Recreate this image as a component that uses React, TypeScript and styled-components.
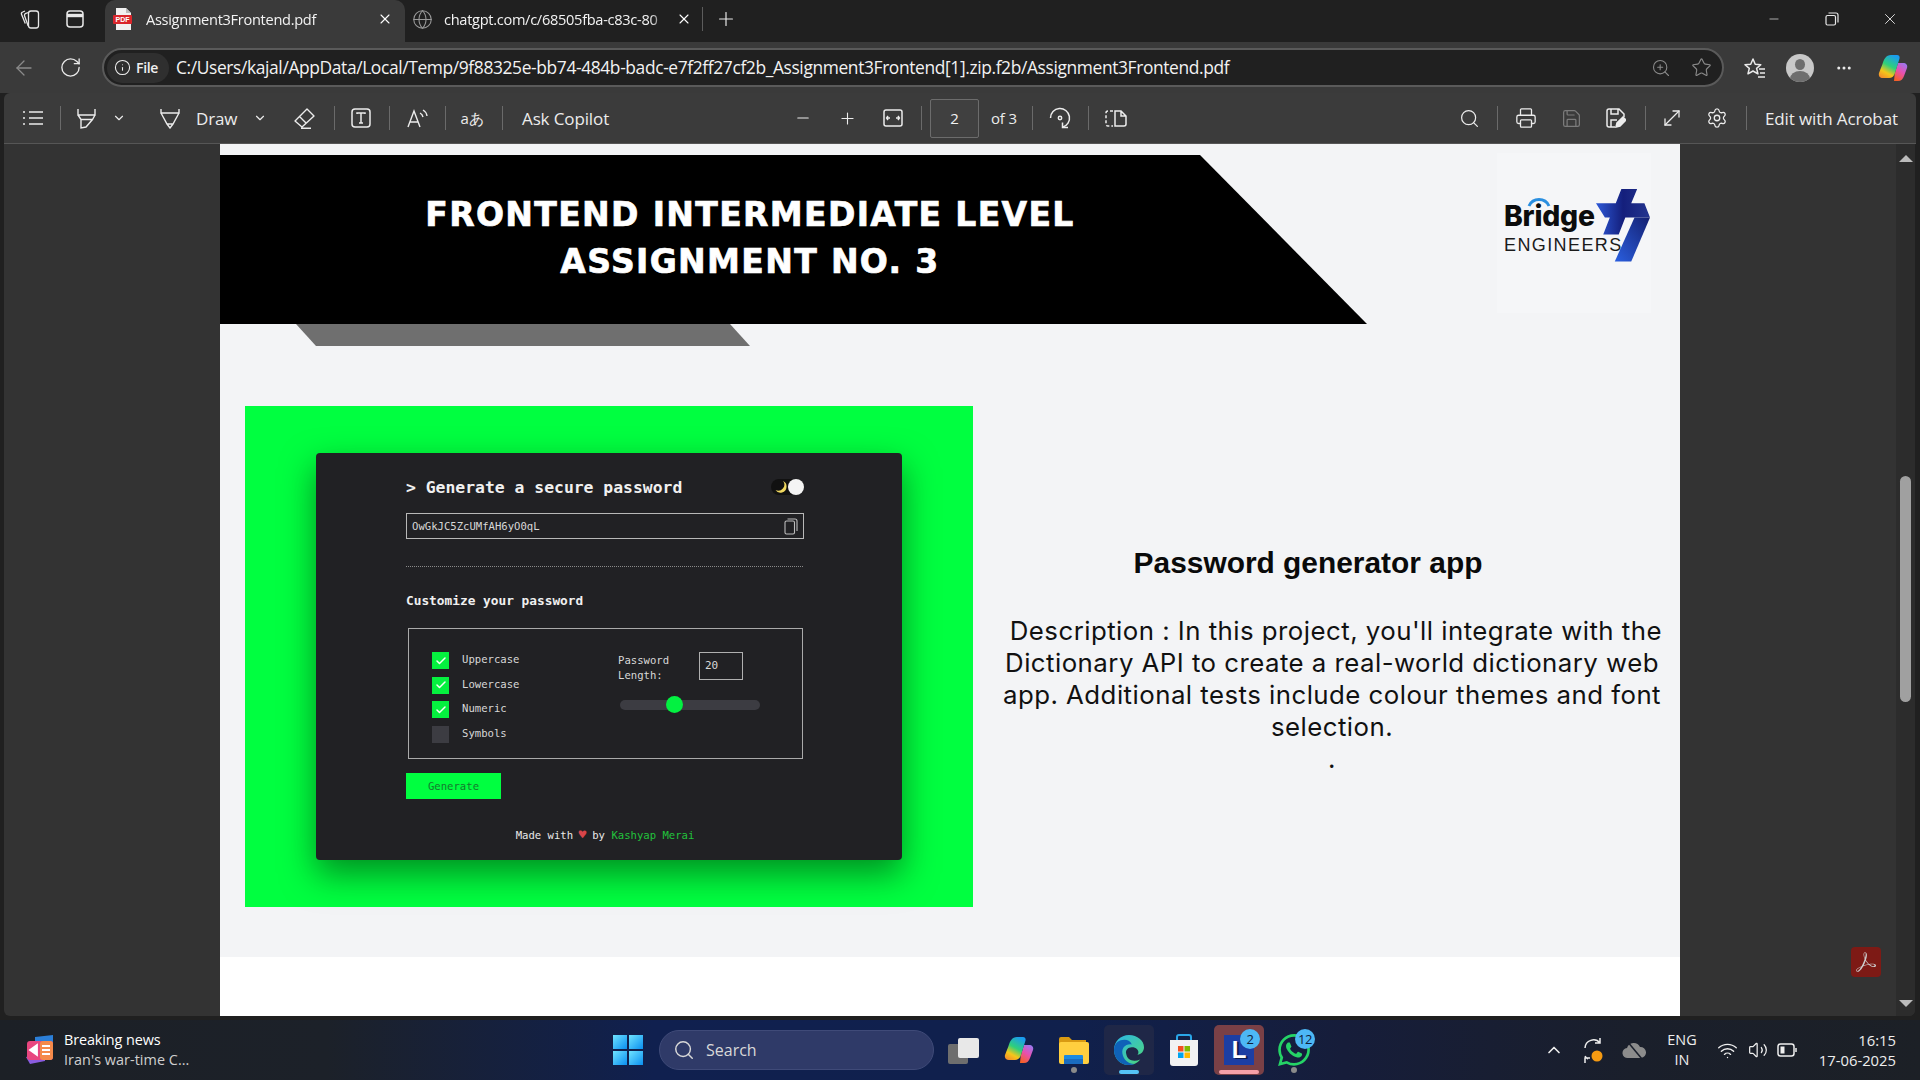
import * as React from 'react'
import styled, {createGlobalStyle} from 'styled-components'
import {ArrowLeft,RotateCw,Info,ZoomIn,Star,MoreHorizontal,X,Plus,Minus,Globe,ChevronDown,ChevronUp,Search,Printer,Save,MoveDiagonal,Settings,Wifi,Volume2,Check} from 'lucide-react'
import {SiAdobeacrobatreader,SiWhatsapp} from 'react-icons/si'

const ui = `"Open Sans","Noto Sans",sans-serif`
const mono = `"DejaVu Sans Mono","Liberation Mono",monospace`

const Global = createGlobalStyle`
    html,body{margin:0;padding:0;background:#202020;overflow:hidden;}
    #root{width:1920px;height:1080px;}
`
const Root = styled.div`
    width:1920px;height:1080px;display:flex;flex-direction:column;background:#202020;
    font-family:${ui};color:#fff;overflow:hidden;
`
/* tab strip */
const TabStrip = styled.div`
    height:42px;flex:none;display:flex;align-items:flex-start;background:#202020;position:relative;
`
const StripIcon = styled.div<{$w:number}>`
    width:${p=>p.$w}px;height:38px;flex:none;display:flex;align-items:center;justify-content:center;
    color:#e8e8e8;
`
const Tab = styled.div<{$active?:boolean;$w:number}>`
    width:${p=>p.$w}px;height:42px;flex:none;display:flex;align-items:center;
    box-sizing:border-box;padding:0 ${p=>p.$active?'12px':'10px'} 4px ${p=>p.$active?'6px':'7px'};
    background:${p=>p.$active?'#3a3a3a':'transparent'};border-radius:10px 10px 0 0;
`
const TabTitle = styled.div`
    flex:1;margin-left:11px;font-size:14.6px;letter-spacing:-.3px;white-space:nowrap;overflow:hidden;color:#f2f2f2;
    mask-image:linear-gradient(90deg,#000 92%,transparent);
`
const StripSep = styled.div`width:1px;height:24px;margin-top:7px;background:#5c5c5c;flex:none;`
const WinControls = styled.div`
    margin-left:auto;display:flex;align-items:center;padding-right:1px;color:#e8e8e8;
`
/* address row */
const AddressRow = styled.div`
    height:51px;flex:none;display:flex;align-items:center;background:#3a3a3a;box-sizing:border-box;
`
const RowIcon = styled.div<{$w:number;$dim?:boolean}>`
    width:${p=>p.$w}px;flex:none;display:flex;align-items:center;justify-content:center;
    color:${p=>p.$dim?'#8a8a8a':'#eaeaea'};
`
const AddressBar = styled.div`
    width:1622px;height:39px;flex:none;box-sizing:border-box;display:flex;align-items:center;
    background:#202020;border:2px solid #5a5a5a;border-radius:20px;padding:0 1px 0 3px;
`
const FilePill = styled.div`
    width:62px;height:30px;flex:none;display:flex;align-items:center;gap:5px;padding-left:7px;box-sizing:border-box;
    background:#2f2f2f;border-radius:15px;font-size:14px;font-weight:600;color:#f0f0f0;letter-spacing:-.3px;
`
const Url = styled.div`
    flex:1;margin-left:7px;padding-bottom:1px;font-size:17.4px;letter-spacing:-.376px;color:#f2f2f2;white-space:nowrap;
`
const Avatar = styled.div`
    width:28px;height:28px;border-radius:50%;background:#c8c8c8;position:relative;overflow:hidden;
    &::before{content:'';position:absolute;left:9px;top:5px;width:10px;height:11px;border-radius:50%;background:#6e6e6e;}
    &::after{content:'';position:absolute;left:4px;top:17px;width:20px;height:16px;border-radius:50%;background:#6e6e6e;}
`
/* pdf toolbar */
const Toolbar = styled.div`
    height:51px;flex:none;margin:0 4px;display:flex;align-items:center;background:#3b3b3b;
    padding-left:13px;border-bottom:1px solid #565656;border-radius:6px 6px 0 0;box-sizing:border-box;
`
const Slot = styled.div<{$w:number;$dim?:boolean;$left?:number;$small?:boolean}>`
    width:${p=>p.$w}px;flex:none;display:flex;align-items:center;
    justify-content:${p=>p.$left!==undefined?'flex-start':'center'};
    padding-left:${p=>p.$left??0}px;box-sizing:border-box;
    color:${p=>p.$dim?'#7c7c7c':'#ececec'};font-size:${p=>p.$small?'15px':'17px'};letter-spacing:-.12px;white-space:nowrap;
`
const BarSep = styled.div`width:1px;height:24px;background:#6a6a6a;`
const PageBox = styled.div`
    width:49px;height:39px;margin-left:3px;flex:none;display:flex;align-items:center;justify-content:center;
    background:#404040;border:1px solid #6c6c6c;border-radius:2px;box-sizing:border-box;font-size:15px;color:#f2f2f2;
`
const RightTools = styled.div`margin-left:auto;display:flex;align-items:center;`
/* viewer */
const Viewer = styled.div`
    height:872px;flex:none;margin:0 5px 0 4px;display:flex;background:#333;position:relative;
    border-radius:0 0 6px 6px;overflow:hidden;
`
const Gutter = styled.div<{$w:number}>`width:${p=>p.$w}px;flex:none;`
const Page = styled.div`
    width:1460px;flex:none;display:flex;flex-direction:column;background:#f3f4f6;color:#000;overflow:hidden;
`
const HeaderRow = styled.div`display:flex;padding-top:11px;height:169px;flex:none;`
const Banner = styled.div`
    width:1147px;height:169px;flex:none;background:#000;color:#fff;box-sizing:border-box;padding-top:36px;
    clip-path:polygon(0 0,980px 0,1147px 169px,0 169px);
`
const BannerTitle = styled.div`
    width:1060px;text-align:center;font-family:"DejaVu Sans",Inter,sans-serif;font-weight:700;
    font-size:33px;line-height:47px;letter-spacing:1.36px;-webkit-text-stroke:.7px #fff;
`
const LogoBox = styled.div`
    width:154px;height:160px;margin-left:130px;margin-top:-2px;flex:none;background:#f5f6f8;
    box-sizing:border-box;padding:35px 0 0 7px;display:flex;
`
const LogoText = styled.div`width:91px;flex:none;display:flex;flex-direction:column;padding-top:13px;position:relative;`
const LogoBridge = styled.div`
    font-family:Inter,"Liberation Sans",sans-serif;font-weight:800;font-size:28.3px;line-height:30px;letter-spacing:-.2px;color:#0c0c0c;
`
const LogoArc = styled.svg`position:absolute;left:23px;top:9px;`
const LogoSub = styled.div`
    font-family:"Liberation Sans",sans-serif;font-size:18px;line-height:20px;letter-spacing:1.4px;color:#1b1b1b;margin-top:4px;white-space:nowrap;position:relative;z-index:1;
`
const Strip = styled.div`
    width:454px;height:22px;margin-left:76px;background:#6f6f6f;
    clip-path:polygon(0 0,434px 0,454px 100%,20px 100%);
    flex:none;
`
const Content = styled.div`display:flex;margin-top:60px;padding-left:25px;height:501px;flex:none;`
const GreenBox = styled.div`
    width:728px;height:501px;flex:none;background:#00ff40;display:flex;align-items:center;justify-content:center;
`
const Card = styled.div`
    width:586px;height:407px;background:#212124;border-radius:4px;box-shadow:0 14px 34px rgba(0,50,10,.55);
    box-sizing:border-box;padding:0 98px 0 90px;font-family:${mono};color:#f0f0f0;display:flex;flex-direction:column;
`
const CardHead = styled.div`
    height:34px;margin-top:17px;display:flex;align-items:center;justify-content:space-between;
    font-size:16.4px;font-weight:700;white-space:pre;flex:none;
`
const Toggle = styled.div`
    width:33px;height:16px;border-radius:8px;background:#111;display:flex;align-items:center;justify-content:space-between;
    padding:0 0 0 4px;box-sizing:border-box;
`
const ToggleDot = styled.div`width:16px;height:16px;border-radius:50%;background:#f4f4f4;`
const PassField = styled.div`
    height:26px;margin-top:9px;border:1px solid #b8b8b8;box-sizing:border-box;display:flex;align-items:center;
    justify-content:space-between;padding:0 5px;font-size:10.6px;color:#d8d8d8;flex:none;
`
const Dotted = styled.div`
    height:1px;margin-top:27px;flex:none;
    background:repeating-linear-gradient(90deg,#8a8a8a 0 1px,transparent 1px 2px);
`
const SubHead = styled.div`font-size:12.8px;font-weight:700;margin-top:26px;line-height:16px;flex:none;`
const Options = styled.div`
    height:131px;width:395px;margin:19px 0 0 2px;flex:none;border:1.5px solid #aaa;box-sizing:border-box;
    display:flex;padding:23px 0 0 23px;
`
const Checks = styled.div`width:186px;flex:none;display:flex;flex-direction:column;gap:7.6px;`
const CheckRow = styled.div`display:flex;align-items:flex-start;height:17px;gap:13px;font-size:10.6px;line-height:15px;color:#d8d8d8;`
const Box = styled.div<{$on:boolean}>`
    width:17px;height:17px;background:${p=>p.$on?'#05f13f':'#3c3c42'};color:#f4fff4;display:flex;align-items:center;justify-content:center;
`
const LengthCol = styled.div`width:142px;flex:none;display:flex;flex-direction:column;`
const LengthRow = styled.div`display:flex;justify-content:space-between;font-size:10.6px;line-height:14.5px;color:#d8d8d8;padding-right:17px;`
const LengthLabel = styled.div`padding-top:1px;`
const LengthInput = styled.div`
    width:44px;height:28px;border:1px solid #b0b0b0;box-sizing:border-box;display:flex;align-items:center;padding-left:5px;
    font-size:11px;
`
const Slider = styled.div`
    height:10px;width:140px;margin:18px 0 0 2px;border-radius:5px;background:#3c3c42;position:relative;
`
const Thumb = styled.div`
    position:absolute;left:46px;top:-4px;width:17px;height:17px;border-radius:50%;background:#03f141;
`
const GenerateBtn = styled.div`
    width:95px;height:26px;margin-top:14px;flex:none;background:#00ff40;color:#157a2e;font-size:10.6px;
    display:flex;align-items:center;justify-content:center;
`
const CardFoot = styled.div`margin-top:29px;text-align:center;font-size:10.6px;line-height:14px;color:#e8e8e8;`
const Heart = styled.span`color:#d8454a;font-size:13px;display:inline-block;width:6.4px;line-height:10px;text-indent:-1px;`
const Author = styled.span`color:#22c23c;`
const Side = styled.div`width:707px;flex:none;box-sizing:border-box;padding-top:137px;`
const SideTitle = styled.div`
    width:670px;text-align:center;font-family:"Liberation Sans",sans-serif;font-weight:700;font-size:29.9px;line-height:40px;color:#0a0a0a;
`
const SideText = styled.div`
    width:674px;margin:32px 0 0 22px;text-align:center;font-size:25.8px;line-height:32px;letter-spacing:.47px;color:#111;font-family:Inter,"Open Sans",sans-serif;white-space:pre;
`
const PageFoot = styled.div`flex:1;background:#fff;margin-top:50px;`
const ScrollTrack = styled.div`
    width:19px;flex:none;background:#2c2c2c;display:flex;flex-direction:column;align-items:center;position:relative;
`
const ScrollArrow = styled.div<{$down?:boolean}>`
    width:0;height:0;border-left:7px solid transparent;border-right:7px solid transparent;
    ${p=>p.$down?'border-top:7px solid #bbb;':'border-bottom:7px solid #bbb;'}
    margin-top:${p=>p.$down?'auto':'11px'};margin-bottom:${p=>p.$down?'9px':'0'};flex:none;
`
const ScrollThumb = styled.div`width:11px;height:226px;margin-top:314px;border-radius:6px;background:#a0a0a0;flex:none;`
const AcrobatBadge = styled.div`
    position:absolute;right:34px;bottom:39px;width:30px;height:30px;border-radius:4px;background:#7d1a15;
    display:flex;align-items:center;justify-content:center;color:#ccc;
`
/* taskbar */
const Taskbar = styled.div`
    height:60px;margin-top:4px;flex:none;display:flex;align-items:center;position:relative;
    background:linear-gradient(90deg,#1c2026 0%,#1c2129 17%,#10204f 34%,#10204c 56%,#161d3a 70%,#1a1f2b 85%,#1c2026 100%);
`
const News = styled.div`width:613px;flex:none;display:flex;align-items:center;box-sizing:border-box;padding-left:25px;gap:9px;`
const NewsText = styled.div`display:flex;flex-direction:column;font-size:14.4px;line-height:20px;letter-spacing:-.1px;`
const NewsSub = styled.div`color:#cfcfcf;letter-spacing:.05px;`
const StartIcon = styled.div`width:30px;height:30px;flex:none;display:grid;grid-template-columns:1fr 1fr;gap:2px;`
const StartPane = styled.div`background:linear-gradient(135deg,#6fe3ff,#0a8ff0);`
const SearchPill = styled.div`
    width:275px;height:40px;margin-left:16px;flex:none;box-sizing:border-box;border-radius:20px;background:#2f3a68;border:1px solid #3f4a78;
    display:flex;align-items:center;gap:11px;padding-left:13px;font-size:16px;color:#d8d8d8;
`
const TaskSlot = styled.div<{$w:number;$bg?:string;$gapLeft?:number}>`
    width:${p=>p.$w}px;height:50px;margin-left:${p=>p.$gapLeft??0}px;flex:none;display:flex;align-items:center;justify-content:center;position:relative;
    border-radius:5px;background:${p=>p.$bg??'transparent'};
`
const RunDot = styled.div`position:absolute;bottom:2px;left:50%;margin-left:-3px;width:6px;height:6px;border-radius:50%;background:#8a8a8a;`
const RunBar = styled.div<{$c:string;$w:number}>`
    position:absolute;bottom:1px;left:50%;margin-left:-${p=>p.$w/2}px;width:${p=>p.$w}px;height:4px;border-radius:2px;background:${p=>p.$c};
`
const Badge = styled.div<{$right:number}>`
    position:absolute;top:4px;right:${p=>p.$right}px;width:20px;height:20px;border-radius:50%;background:#4db8f5;color:#10203a;
    font-size:13px;display:flex;align-items:center;justify-content:center;letter-spacing:-.5px;
`
const LIcon = styled.div`
    width:30px;height:30px;background:#1c3ea3;color:#fff;font-family:"Liberation Sans",sans-serif;font-weight:700;font-size:24px;
    display:flex;align-items:center;justify-content:center;text-shadow:2px 1px 0 #0a1c50;
`
const Tray = styled.div`margin-left:auto;display:flex;align-items:center;padding-right:24px;`
const TrayIcon = styled.div<{$w:number}>`width:${p=>p.$w}px;flex:none;display:flex;align-items:center;justify-content:center;color:#eee;position:relative;`
const Lang = styled.div`width:50px;text-align:center;font-size:14.4px;line-height:20px;flex:none;color:#eee;`
const Clock = styled.div`width:87px;margin-left:4px;text-align:right;font-size:14.8px;line-height:20px;flex:none;color:#eee;letter-spacing:0;`

const WorkspacesIcon=()=>(
    <svg width="22" height="22" viewBox="0 0 22 22" fill="none" stroke="currentColor" strokeWidth="1.3">
        <rect x="9.500" y="3" width="10" height="17" rx="2.500"/>
        <path d="M9.500 4.500 6.800 5.400a2 2 0 0 0-1.200 2.600l3.600 10M6 3 3.700 4a2 2 0 0 0-1.100 2.600l3.700 9"/>
    </svg>
)
const TabsIcon=()=>(
    <svg width="20" height="20" viewBox="0 0 20 20" fill="none" stroke="currentColor" strokeWidth="1.5">
        <rect x="2" y="2" width="16" height="16" rx="3"/><path d="M2 6.500h16" strokeWidth="3.400"/>
    </svg>
)
const RestoreIcon=()=>(
    <svg width="14" height="14" viewBox="0 0 14 14" fill="none" stroke="currentColor" strokeWidth="1.2">
        <rect x="1" y="3.500" width="9.500" height="9.500" rx="1.500"/><path d="M3.500 1h7.500a2 2 0 0 1 2 2v7.500"/>
    </svg>
)
const PdfIcon=()=>(
    <svg width="20" height="22" viewBox="0 0 20 22">
        <path d="M3 0h10l5 5v17H3z" fill="#f1f1f1"/><path d="M13 0l5 5h-5z" fill="#bbb"/>
        <rect x="0" y="7" width="19" height="9" rx="1" fill="#d9262b"/>
        <text x="9.500" y="14.400" textAnchor="middle" fontSize="7" fontWeight="700" fontFamily="Liberation Sans" fill="#fff">PDF</text>
    </svg>
)
const ListIcon=()=>(
    <svg width="22" height="16" viewBox="0 0 22 16" stroke="currentColor" strokeWidth="1.600" fill="none">
        <path d="M7 2h14M7 8h14M7 14h14M1 2h2M1 8h2M1 14h2"/>
    </svg>
)
const HighlightIcon=()=>(
    <svg width="19" height="21" viewBox="0 0 19 21" stroke="currentColor" strokeWidth="1.400" fill="none">
        <path d="M1 1v6h17V1M1 7l3 4.500h11.500L18 7M4 11.500V20l5-1 6.500-7.500"/>
    </svg>
)
const DrawIcon=()=>(
    <svg width="20" height="21" viewBox="0 0 20 21" stroke="currentColor" strokeWidth="1.400" fill="none">
        <path d="M1 1v4h18V1M1 5l6 11h6l6-11M7 16l3 4 3-4"/>
    </svg>
)
const EraserIcon=()=>(
    <svg width="22" height="21" viewBox="0 0 22 21" stroke="currentColor" strokeWidth="1.400" fill="none" strokeLinejoin="round">
        <path d="M1 13 13 1l7 7L8 19zM5.500 8.500l7 7M7 20.300h10"/>
    </svg>
)
const TextBoxIcon=()=>(
    <svg width="20" height="20" viewBox="0 0 20 20" stroke="currentColor" strokeWidth="1.500" fill="none">
        <rect x="1" y="1" width="18" height="18" rx="3"/><path d="M6 6V5h8v1M10 5v10M8 15h4"/>
    </svg>
)
const ReadAloudIcon=()=>(
    <svg width="22" height="20" viewBox="0 0 22 20" stroke="currentColor" strokeWidth="1.400" fill="none">
        <path d="M2 19 8 3l6 16M4 14h8M14 5a6 6 0 0 1 3 4M17 2a8 8 0 0 1 4 6"/>
    </svg>
)
const FitIcon=()=>(
    <svg width="20" height="18" viewBox="0 0 20 18" stroke="currentColor" strokeWidth="1.500" fill="none">
        <rect x="1" y="1" width="18" height="16" rx="2"/><path d="M4 9h3M5 7 3.600 9 5 11M16 9h-3M15 7l1.400 2-1.400 2"/>
    </svg>
)
const RotateIcon=()=>(
    <svg width="22" height="26" viewBox="0 -2 22 26" stroke="currentColor" strokeWidth="1.500" fill="none">
        <path d="M1.500 11a9.500 9.500 0 1 1 12 9.200"/><path d="M13.500 15.500v5h5.500"/><circle cx="11" cy="11" r="1.700"/>
    </svg>
)
const TwoPageIcon=()=>(
    <svg width="22" height="17" viewBox="0 0 22 17" stroke="currentColor" strokeWidth="1.500" fill="none">
        <path d="M8 1H3a2 2 0 0 0-2 2v11a2 2 0 0 0 2 2h5" strokeDasharray="3 2"/>
        <path d="M10 1h6l5 5v8a2 2 0 0 1-2 2h-9zM16 1v5h5"/>
    </svg>
)
const SaveAsIcon=()=>(
    <svg width="20" height="20" viewBox="0 0 20 20" stroke="currentColor" strokeWidth="1.500" fill="none">
        <path d="M9 19H3a2 2 0 0 1-2-2V3a2 2 0 0 1 2-2h10l5 5v3M5 1v5h7V1M5 19v-7h6"/><path d="M10 19l1-4 6-6 3 3-6 6z" fill="currentColor"/>
    </svg>
)
const FavListIcon=()=>(
    <svg width="22" height="22" viewBox="0 0 22 22" stroke="currentColor" strokeWidth="1.500" fill="none" strokeLinejoin="round">
        <path d="M9 2l2.200 5.200 5.600.5-4.200 3.700 1.300 5.400L9 14l-5 2.800 1.300-5.400L1 7.700l5.700-.5zM15 12h6M16 16h5M14 20h7"/>
    </svg>
)
const CopilotIcon=({size}:{size:number})=>(
    <svg width={size} height={size} viewBox="0 0 30 30">
        <defs>
            <linearGradient id="cpa" x1=".7" y1="0" x2=".2" y2="1"><stop offset="0" stopColor="#1a9cf0"/><stop offset=".45" stopColor="#2fd07a"/><stop offset=".75" stopColor="#f5c71a"/><stop offset="1" stopColor="#f5902a"/></linearGradient>
            <linearGradient id="cpb" x1=".8" y1="0" x2=".3" y2="1"><stop offset="0" stopColor="#9a78f0"/><stop offset=".5" stopColor="#e850b0"/><stop offset="1" stopColor="#f5602a"/></linearGradient>
        </defs>
        <path d="M16 28h4c3 0 5-2 6-5l3-8c1-3-1-5-4-5h-5l-3 10c-.6 2-.6 5-1 8z" fill="url(#cpb)"/>
        <path d="M13 2h6c2 0 3 1.500 2.500 3.500L17 20c-.8 3-3 5-6 5H5c-3 0-4.800-2-4-5l3.500-9C6 6 8 2 13 2z" fill="url(#cpa)"/>
    </svg>
)
const NewsIcon=()=>(
    <svg width="30" height="30" viewBox="0 0 30 30">
        <path d="M10 2 28 0v22H10z" fill="#2b7fd8"/><path d="M1 22l4 7 15-3V18z" fill="#8a5ce0"/>
        <rect x="2" y="6" width="26" height="19" rx="3" fill="#e8467f"/><rect x="15" y="6" width="13" height="19" rx="3" fill="#f58a4a"/>
        <path d="M5 15l7-5v10zM17 11h8M17 15h8M17 19h8" stroke="#fff" strokeWidth="1.800" fill="#fff"/>
    </svg>
)
const TaskViewIcon=()=>(
    <svg width="32" height="28" viewBox="0 0 32 28">
        <rect x="0" y="8" width="20" height="20" rx="2" fill="#6e6e6e"/><rect x="10" y="2" width="21" height="20" rx="2" fill="#e8e8e8"/>
    </svg>
)
const FolderIcon=()=>(
    <svg width="30" height="27" viewBox="0 0 30 27">
        <path d="M0 2a2 2 0 0 1 2-2h8l3 3h14v6H0z" fill="#d99a12"/><rect x="0" y="5" width="30" height="22" rx="2" fill="#ffcf3f"/>
        <rect x="5" y="18" width="19" height="5" rx="1" fill="#1b8ae0"/><rect x="5" y="22" width="19" height="5" fill="#1a6cc0"/>
    </svg>
)
const EdgeIcon=()=>(
    <svg width="30" height="30" viewBox="0 0 32 32">
        <defs><linearGradient id="edgeg" x1="0" y1="0" x2="1" y2="1"><stop offset="0" stopColor="#2bb5e8"/><stop offset="1" stopColor="#4fd878"/></linearGradient></defs>
        <path d="M16 0C7 0 0 7 0 16c0 9 7 16 15 16 5 0 10-2 13-6-7 3-14 1-15-6-1-4 2-7 6-7 5 0 7 3 7 5 0 1 0 2-1 3 4 0 7-4 7-8C32 6 25 0 16 0z" fill="url(#edgeg)"/>
        <path d="M0 16C0 8 6 5 11 5c4 0 7 2 8 5-7-1-11 4-10 10 1 6 6 11 13 11-2 1-5 1-7 1C7 32 0 25 0 16z" fill="#0f62b8"/>
    </svg>
)
const StoreIcon=()=>(
    <svg width="30" height="32" viewBox="0 0 30 32">
        <path d="M8 7V3a2 2 0 0 1 2-2h10a2 2 0 0 1 2 2v4" stroke="#2aa6e8" strokeWidth="2" fill="none"/>
        <path d="M1 6h28v23a3 3 0 0 1-3 3H4a3 3 0 0 1-3-3z" fill="#f2f2f2"/>
        <rect x="9" y="12" width="5.500" height="5.500" fill="#f25022"/><rect x="15.500" y="12" width="5.500" height="5.500" fill="#7fba00"/>
        <rect x="9" y="18.500" width="5.500" height="5.500" fill="#00a4ef"/><rect x="15.500" y="18.500" width="5.500" height="5.500" fill="#ffb900"/>
    </svg>
)
const SyncIcon=()=>(
    <svg width="24" height="28" viewBox="0 0 24 28" fill="none" stroke="#eee" strokeWidth="1.500">
        <path d="M3 12a8.500 8.500 0 0 1 15-5M18 2v5h-5M3 20a8 8 0 0 0 3 3M3 27v-5h5"/><circle cx="15" cy="20" r="5.500" fill="#f59a12" stroke="none"/>
    </svg>
)
const CloudOffIcon=()=>(
    <svg width="24" height="20" viewBox="0 0 24 20">
        <path d="M6 18a5 5 0 0 1-1-10 7 7 0 0 1 13-1 5.500 5.500 0 0 1 1 11z" fill="#8c8c8c"/><path d="M5 1l15 18" stroke="#1a1f2b" strokeWidth="1.500"/>
    </svg>
)
const BatteryIcon=()=>(
    <svg width="20" height="14" viewBox="0 0 20 14" fill="none" stroke="#eee" strokeWidth="1.500">
        <rect x="1" y="1" width="16" height="12" rx="2.500"/><path d="M19 5v4"/><rect x="3.500" y="3.500" width="4" height="7" fill="#eee" stroke="none"/>
    </svg>
)
const MoonIcon=()=>(
    <svg width="12" height="12" viewBox="0 0 12 12"><path d="M8 0a6 6 0 0 1-7.500 9A6 6 0 0 0 11.500 6 6 6 0 0 0 8 0z" fill="#f0d860"/></svg>
)
const CopyFieldIcon=()=>(
    <svg width="14" height="17" viewBox="0 0 14 17" fill="none" stroke="#bdbdbd" strokeWidth="1.100">
        <rect x="1" y="3" width="9.500" height="13" rx="1.500"/><path d="M3.500 1H11a2 2 0 0 1 2 2v10"/>
    </svg>
)
const SevenMark=()=>(
    <svg width="56" height="75" viewBox="0 0 170 225" style={{flex:'none'}}>
        <defs>
            <linearGradient id="sevenA" x1="0" y1="0" x2="1" y2="0"><stop offset="0" stopColor="#2d59d8"/><stop offset=".5" stopColor="#141f7c"/><stop offset="1" stopColor="#24358f"/></linearGradient>
            <linearGradient id="sevenB" x1="1" y1="0" x2="0" y2="1"><stop offset="0" stopColor="#141f70"/><stop offset="1" stopColor="#2a5fe0"/></linearGradient>
        </defs>
        <path d="M3 45H63L80 2H128L110 45H150L167 88H92L72 140H25L45 88H30Z" fill="url(#sevenA)"/>
        <path d="M167 88 110 222H60L120 88Z" fill="url(#sevenB)"/>
    </svg>
)

const S=({w}:{w:number})=><Slot $w={w}><BarSep/></Slot>

export default function App(){
    return(
        <Root>
            <Global/>
            <TabStrip>
                <StripIcon $w={60}><WorkspacesIcon/></StripIcon>
                <StripIcon $w={30}><TabsIcon/></StripIcon>
                <StripIcon $w={15}/>
                <Tab $active $w={300}>
                    <StripIcon $w={24}><PdfIcon/></StripIcon>
                    <TabTitle>Assignment3Frontend.pdf</TabTitle>
                    <X size={16} strokeWidth={1.6}/>
                </Tab>
                <Tab $w={297}>
                    <Globe size={21} strokeWidth={1.2} color="#9a9a9a"/>
                    <TabTitle>chatgpt.com/c/68505fba-c83c-80</TabTitle>
                    <X size={16} strokeWidth={1.6} style={{marginLeft:8}}/>
                </Tab>
                <StripSep/>
                <StripIcon $w={46}><Plus size={22} strokeWidth={1.3}/></StripIcon>
                <WinControls>
                    <StripIcon $w={58}><Minus size={14} strokeWidth={1.2}/></StripIcon>
                    <StripIcon $w={58}><RestoreIcon/></StripIcon>
                    <StripIcon $w={58}><X size={18} strokeWidth={1.2}/></StripIcon>
                </WinControls>
            </TabStrip>
            <AddressRow>
                <RowIcon $w={48} $dim><ArrowLeft size={24} strokeWidth={1.3}/></RowIcon>
                <RowIcon $w={44}><RotateCw size={23} strokeWidth={1.4}/></RowIcon>
                <Slot $w={10}/>
                <AddressBar>
                    <FilePill><Info size={17} strokeWidth={1.5}/>File</FilePill>
                    <Url>C:/Users/kajal/AppData/Local/Temp/9f88325e-bb74-484b-badc-e7f2ff27cf2b_Assignment3Frontend[1].zip.f2b/Assignment3Frontend.pdf</Url>
                    <RowIcon $w={40} $dim><ZoomIn size={20} strokeWidth={1.3}/></RowIcon>
                    <RowIcon $w={40} $dim><Star size={21} strokeWidth={1.3}/></RowIcon>
                </AddressBar>
                <RowIcon $w={62}><FavListIcon/></RowIcon>
                <RowIcon $w={28}><Avatar/></RowIcon>
                <RowIcon $w={60}><MoreHorizontal size={18}/></RowIcon>
                <RowIcon $w={38}><CopilotIcon size={30}/></RowIcon>
            </AddressRow>
            <Toolbar>
                <Slot $w={32}><ListIcon/></Slot>
                <S w={22}/>
                <Slot $w={30}><HighlightIcon/></Slot>
                <Slot $w={36}><ChevronDown size={14}/></Slot>
                <Slot $w={8}/>
                <Slot $w={50}><DrawIcon/></Slot>
                <Slot $w={42} $left={1}>Draw</Slot>
                <Slot $w={46}><ChevronDown size={14}/></Slot>
                <Slot $w={44}><EraserIcon/></Slot>
                <S w={14}/>
                <Slot $w={40}><TextBoxIcon/></Slot>
                <S w={16}/>
                <Slot $w={40}><ReadAloudIcon/></Slot>
                <S w={16}/>
                <Slot $w={38} $small>aあ</Slot>
                <S w={22}/>
                <Slot $w={100} $left={9}>Ask Copilot</Slot>
                <Slot $w={170}/>
                <Slot $w={40}><Minus size={18} strokeWidth={1.4}/></Slot>
                <Slot $w={48}><Plus size={19} strokeWidth={1.4}/></Slot>
                <Slot $w={44}><FitIcon/></Slot>
                <S w={12}/>
                <PageBox>2</PageBox>
                <Slot $w={50} $small>of 3</Slot>
                <S w={6}/>
                <Slot $w={50}><RotateIcon/></Slot>
                <S w={6}/>
                <Slot $w={50}><TwoPageIcon/></Slot>
                <RightTools>
                    <Slot $w={40}><Search size={21} strokeWidth={1.4}/></Slot>
                    <S w={16}/>
                    <Slot $w={42}><Printer size={22} strokeWidth={1.4}/></Slot>
                    <Slot $w={48} $dim><Save size={21} strokeWidth={1.4}/></Slot>
                    <Slot $w={42}><SaveAsIcon/></Slot>
                    <S w={16}/>
                    <Slot $w={38}><MoveDiagonal size={24} strokeWidth={1.3}/></Slot>
                    <Slot $w={52}><Settings size={22} strokeWidth={1.4}/></Slot>
                    <S w={6}/>
                    <Slot $w={167} $left={16}>Edit with Acrobat</Slot>
                </RightTools>
            </Toolbar>
            <Viewer>
                <Gutter $w={216}/>
                <Page>
                    <HeaderRow>
                        <Banner>
                            <BannerTitle>FRONTEND INTERMEDIATE LEVEL<br/>ASSIGNMENT NO. 3</BannerTitle>
                        </Banner>
                        <LogoBox>
                            <LogoText>
                                <LogoArc width="24" height="10" viewBox="0 0 24 10"><path d="M2 9a11 11 0 0 1 20 0" stroke="#2a8fe0" strokeWidth="3" fill="none"/></LogoArc>
                                <LogoBridge>Bridge</LogoBridge>
                                <LogoSub>ENGINEERS</LogoSub>
                            </LogoText>
                            <SevenMark/>
                        </LogoBox>
                    </HeaderRow>
                    <Strip/>
                    <Content>
                        <GreenBox>
                            <Card>
                                <CardHead>
                                    <span>{'> Generate a secure password'}</span>
                                    <Toggle><MoonIcon/><ToggleDot/></Toggle>
                                </CardHead>
                                <PassField>
                                    <span>OwGkJC5ZcUMfAH6yO0qL</span>
                                    <CopyFieldIcon/>
                                </PassField>
                                <Dotted/>
                                <SubHead>Customize your password</SubHead>
                                <Options>
                                    <Checks>
                                        <CheckRow><Box $on><Check size={12} strokeWidth={3}/></Box>Uppercase</CheckRow>
                                        <CheckRow><Box $on><Check size={12} strokeWidth={3}/></Box>Lowercase</CheckRow>
                                        <CheckRow><Box $on><Check size={12} strokeWidth={3}/></Box>Numeric</CheckRow>
                                        <CheckRow><Box $on={false}/>Symbols</CheckRow>
                                    </Checks>
                                    <LengthCol>
                                        <LengthRow>
                                            <LengthLabel>Password<br/>Length:</LengthLabel>
                                            <LengthInput>20</LengthInput>
                                        </LengthRow>
                                        <Slider><Thumb/></Slider>
                                    </LengthCol>
                                </Options>
                                <GenerateBtn>Generate</GenerateBtn>
                                <CardFoot>Made with <Heart>♥</Heart> by <Author>Kashyap Merai</Author></CardFoot>
                            </Card>
                        </GreenBox>
                        <Side>
                            <SideTitle>Password generator app</SideTitle>
                            <SideText>{" Description : In this project, you'll integrate with the\nDictionary API to create a real-world dictionary web\napp. Additional tests include colour themes and font\nselection.\n."}</SideText>
                        </Side>
                    </Content>
                    <PageFoot/>
                </Page>
                <Gutter $w={216}/>
                <ScrollTrack>
                    <ScrollArrow/>
                    <ScrollThumb/>
                    <ScrollArrow $down/>
                </ScrollTrack>
                <AcrobatBadge><SiAdobeacrobatreader size={20}/></AcrobatBadge>
            </Viewer>
            <Taskbar>
                <News>
                    <NewsIcon/>
                    <NewsText>Breaking news<NewsSub>Iran's war-time C...</NewsSub></NewsText>
                </News>
                <StartIcon><StartPane/><StartPane/><StartPane/><StartPane/></StartIcon>
                <SearchPill><Search size={22} strokeWidth={1.6}/>Search</SearchPill>
                <Slot $w={5}/>
                <TaskSlot $w={50}><TaskViewIcon/></TaskSlot>
                <TaskSlot $w={60}><CopilotIcon size={30}/></TaskSlot>
                <TaskSlot $w={50}><FolderIcon/><RunDot/></TaskSlot>
                <TaskSlot $w={50} $bg="#1f2747" $gapLeft={5}><EdgeIcon/><RunBar $c="#55c3f5" $w={20}/></TaskSlot>
                <TaskSlot $w={60}><StoreIcon/></TaskSlot>
                <TaskSlot $w={50} $bg="#7a4046"><LIcon>L</LIcon><Badge $right={4}>2</Badge><RunBar $c="#f5a0a8" $w={40}/></TaskSlot>
                <TaskSlot $w={60}><SiWhatsapp size={32} color="#25d366"/><Badge $right={9}>12</Badge><RunDot/></TaskSlot>
                <Tray>
                    <TrayIcon $w={40}><ChevronUp size={20}/></TrayIcon>
                    <TrayIcon $w={40}><SyncIcon/></TrayIcon>
                    <TrayIcon $w={40}><CloudOffIcon/></TrayIcon>
                    <Slot $w={3}/>
                    <Lang>ENG<br/>IN</Lang>
                    <TrayIcon $w={40}><Wifi size={21} strokeWidth={1.6}/></TrayIcon>
                    <TrayIcon $w={22}><Volume2 size={20} strokeWidth={1.5}/></TrayIcon>
                    <TrayIcon $w={36}><BatteryIcon/></TrayIcon>
                    <Clock>16:15<br/>17-06-2025</Clock>
                </Tray>
            </Taskbar>
        </Root>
    )
}
